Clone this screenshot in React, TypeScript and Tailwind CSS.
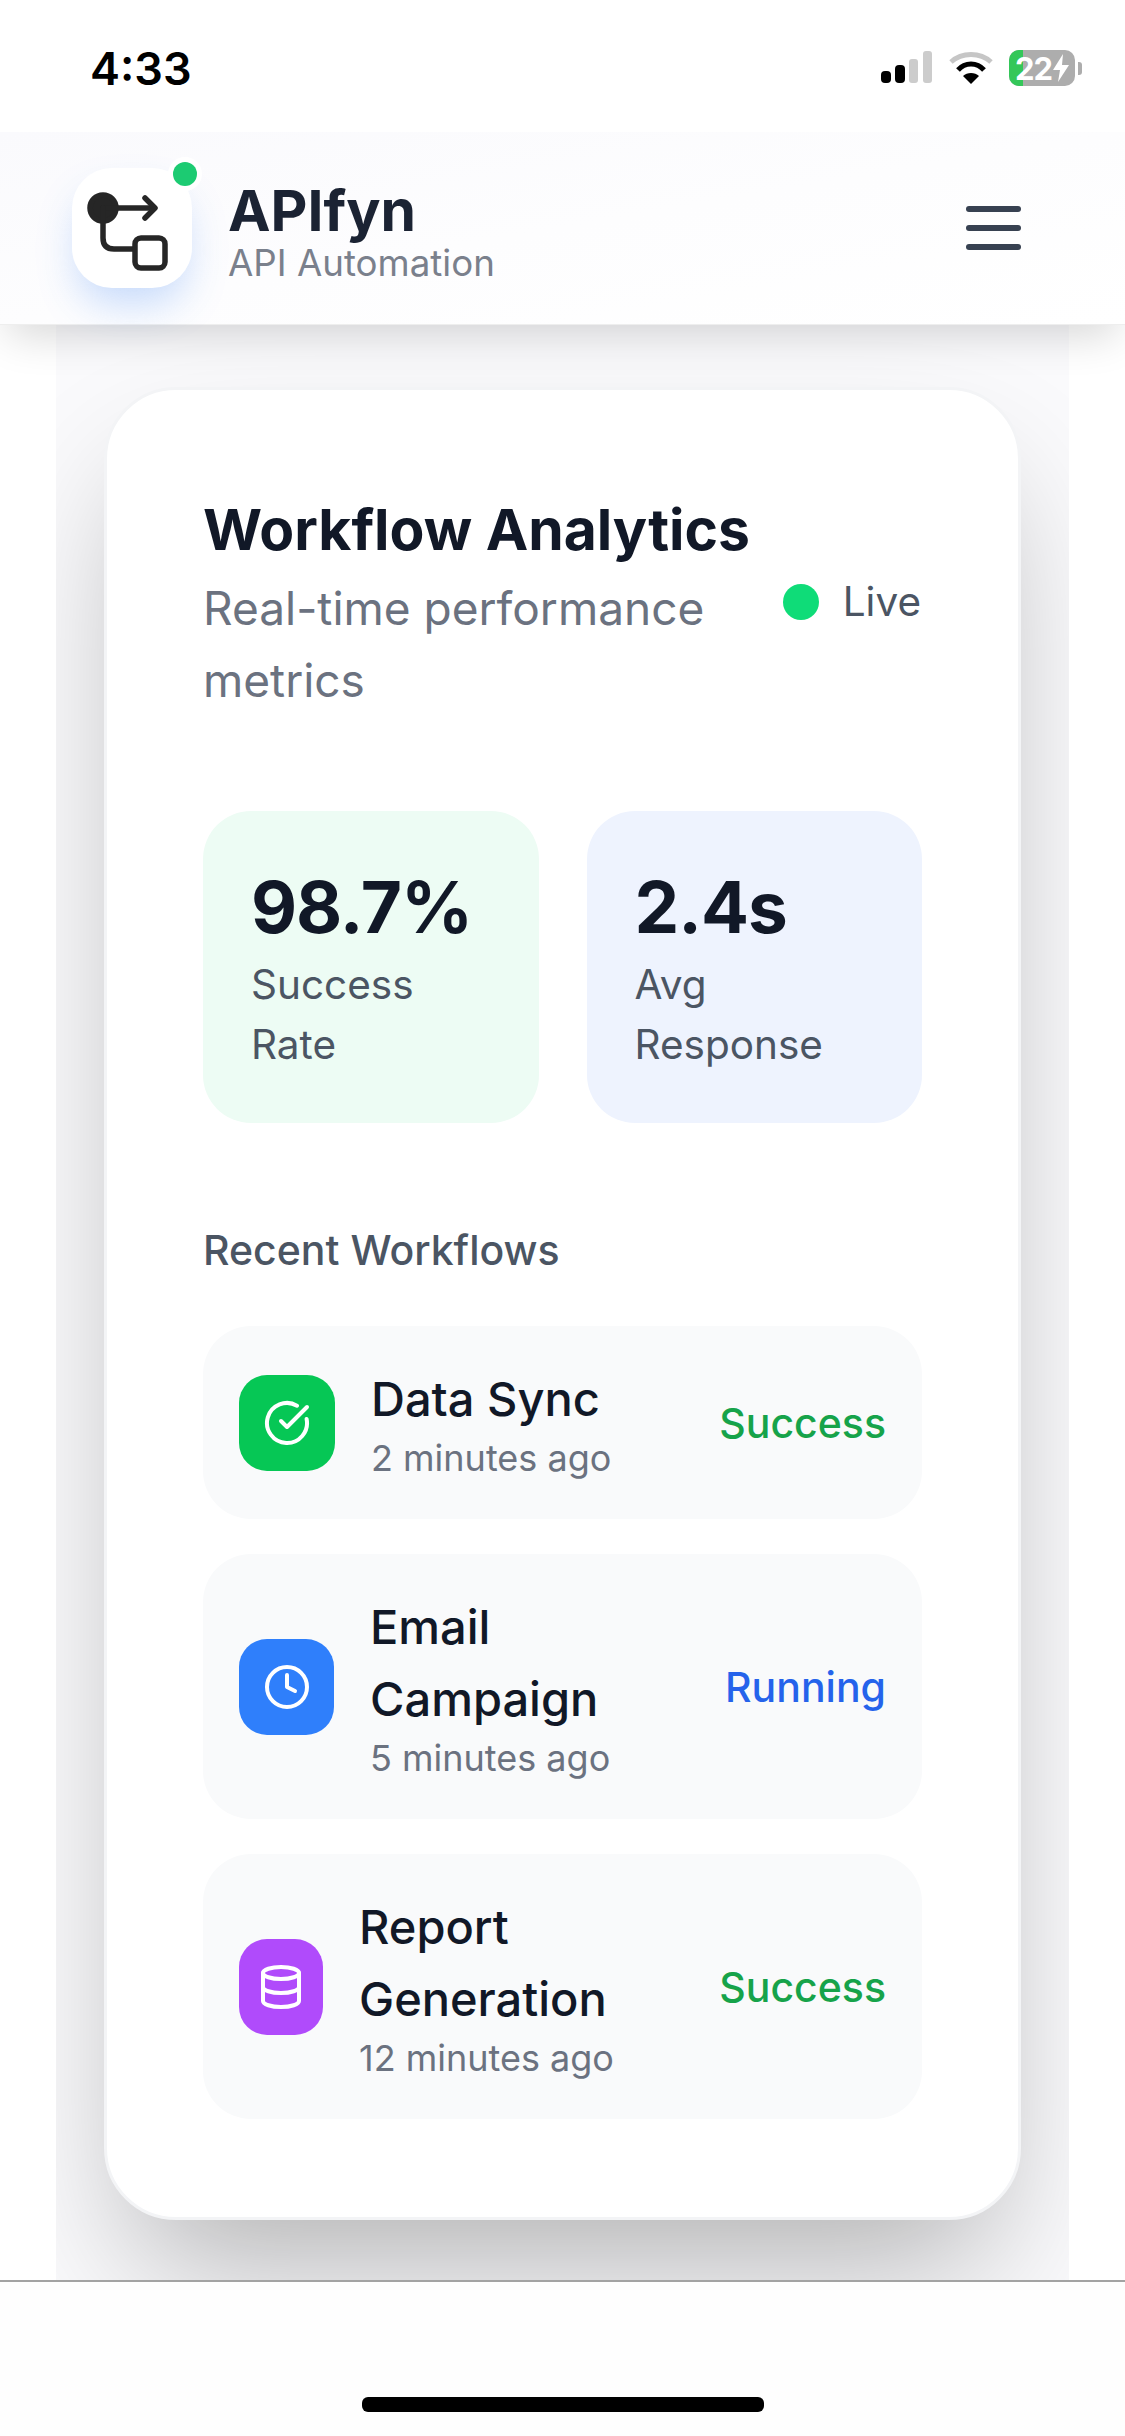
import { CircleCheckBig, Clock, Database } from 'lucide-react';

const rows = [
  { name: 'Data Sync', time: '2 minutes ago', status: 'Success', tone: 'text-[#16a34a]', bg: 'bg-[#06c755]', w: 'w-[96px]', Icon: CircleCheckBig },
  { name: 'Email Campaign', time: '5 minutes ago', status: 'Running', tone: 'text-[#2563eb]', bg: 'bg-[#2f7ffb]', w: 'w-[95px]', Icon: Clock },
  { name: 'Report Generation', time: '12 minutes ago', status: 'Success', tone: 'text-[#16a34a]', bg: 'bg-[#b04bfb]', w: 'w-[84px]', Icon: Database },
];

function StatusBar() {
  return (
    <div className="relative z-20 h-[132px] shrink-0 bg-white flex items-center justify-between pl-[90px] pr-[43px]">
      <span className="text-[45px] leading-none font-semibold text-black mb-[-4px]">4:33</span>
      <div className="flex items-center gap-[15px] mb-[-4px]">
        <svg width="52" height="34" viewBox="0 0 52 34">
          <rect x="0" y="20" width="10" height="12" rx="4" fill="#000" />
          <rect x="14" y="14" width="10" height="18" rx="4" fill="#000" />
          <rect x="28" y="8" width="9" height="24" rx="3" fill="#ccc" />
          <rect x="42" y="0" width="9" height="32" rx="3" fill="#ccc" />
        </svg>
        <svg width="46" height="34" viewBox="0 0 46 34" fill="none">
          <path d="M3 11 C14 1 32 1 43 11" stroke="#c6c6c6" strokeWidth="5" />
          <path d="M10 19 C17 11 29 11 36 19" stroke="#000" strokeWidth="5" />
          <path d="M23 33 L15 25 C19 21 27 21 31 25 Z" fill="#000" />
        </svg>
        <div className="flex items-center gap-[3px]">
          <div className="relative w-[66px] h-[36px] rounded-[10px] bg-[#adadad] overflow-hidden flex items-center justify-center gap-[1px]">
            <div className="absolute left-0 top-0 bottom-0 w-[14px] bg-[#34c759]" />
            <span className="relative text-[31px] leading-none font-bold text-white tracking-[-1px]">22</span>
            <svg className="relative" width="16" height="28" viewBox="0 0 16 28">
              <path d="M10 0 L0 16 H7 L5 28 L16 11 H9 Z" fill="#fff" />
            </svg>
          </div>
          <div className="w-[4px] h-[13px] rounded-r-[3px] bg-[#adadad]" />
        </div>
      </div>
    </div>
  );
}

function Logo() {
  return (
    <div className="relative w-[120px] h-[120px] shrink-0 rounded-[40px] bg-white shadow-[0_22px_40px_-6px_rgba(59,130,246,0.28)] flex items-center justify-center">
      <svg width="120" height="120" viewBox="0 0 120 120" fill="none" stroke="#262626" strokeWidth="5.5" strokeLinecap="round" strokeLinejoin="round">
        <circle cx="31" cy="40" r="13" fill="#262626" />
        <path d="M31 40 H82" />
        <path d="M73 30 L83 40 L73 50" />
        <path d="M31 40 V70 Q31 81 42 81 H61" />
        <rect x="63" y="70" width="30" height="30" rx="6" />
      </svg>
      <div className="absolute right-[-5px] top-[-6px] w-[24px] h-[24px] rounded-full bg-[#1ccb72] ring-[5px] ring-white" />
    </div>
  );
}

function Header() {
  return (
    <header className="relative z-10 h-[193px] shrink-0 bg-gradient-to-br from-[#fafafd] via-[#fdfdfe] to-white shadow-[0_18px_40px_-8px_rgba(0,0,0,0.16)] flex items-center justify-between pl-[72px] pr-[104px] border-b border-[#eeeeee]">
      <div className="flex items-center gap-[36px]">
        <Logo />
        <div className="pt-[6px]">
          <div className="text-[57px] leading-[63px] font-bold text-[#1b2333]">APIfyn</div>
          <div className="text-[36.7px] leading-[42px] text-[#7a808c]">API Automation</div>
        </div>
      </div>
      <div className="flex flex-col gap-[13px] w-[55px]">
        <div className="h-[6px] rounded-full bg-[#374151]" />
        <div className="h-[6px] rounded-full bg-[#374151]" />
        <div className="h-[6px] rounded-full bg-[#374151]" />
      </div>
    </header>
  );
}

function Stat({ value, label, bg }: { value: string; label: string; bg: string }) {
  return (
    <div className={`rounded-[48px] p-[48px] h-[312px] ${bg}`}>
      <div className="text-[71px] leading-[96px] font-bold text-[#111827] tracking-[-1px]">{value}</div>
      <div className="text-[40.5px] leading-[60px] text-[#4b5563]">{label}</div>
    </div>
  );
}

export default function App() {
  return (
    <div className="w-[1125px] h-[2436px] flex flex-col bg-white font-['Inter',sans-serif] overflow-hidden">
      <StatusBar />
      <Header />
      <main className="flex-1 min-h-0 mx-[56px] px-[48px] pt-[62px] bg-[#fafafc] overflow-hidden">
        <section className="rounded-[72px] bg-white border-[3px] border-[#f3f4f6] px-[96px] pt-[98px] pb-[98px] shadow-[0_70px_140px_-30px_rgba(0,0,0,0.3)]">
          <div className="flex items-center justify-between mb-[95px]">
            <div className="w-[560px]">
              <h1 className="text-[57px] leading-[84px] font-bold text-[#111827] whitespace-nowrap">Workflow Analytics</h1>
              <p className="text-[46px] leading-[72px] text-[#6b7280]">Real-time performance metrics</p>
            </div>
            <div className="flex items-center gap-[24px] pr-[1px]">
              <div className="w-[36px] h-[36px] rounded-full bg-[#0fdc78]" />
              <span className="text-[40.5px] leading-[60px] text-[#4b5563]">Live</span>
            </div>
          </div>
          <div className="grid grid-cols-2 gap-[48px] mb-[97px]">
            <Stat value="98.7%" label="Success Rate" bg="bg-[#edfcf4]" />
            <Stat value="2.4s" label="Avg Response" bg="bg-[#eef3fe]" />
          </div>
          <h2 className="text-[41px] leading-[60px] font-medium text-[#4b5563] mb-[46px]">Recent Workflows</h2>
          <div className="flex flex-col gap-[35px]">
            {rows.map(({ name, time, status, tone, bg, w, Icon }) => (
              <div key={name} className="flex items-center justify-between gap-[36px] rounded-[48px] bg-[#f9fafb] px-[36px] py-[37px]">
                <div className="flex items-center gap-[36px] min-w-0">
                  <div className={`${w} h-[96px] shrink-0 rounded-[28px] flex items-center justify-center ${bg}`}>
                    <Icon size={48} color="#fff" strokeWidth={2} />
                  </div>
                  <div className="min-w-0">
                    <div className="text-[47px] leading-[72px] font-medium text-[#111827]">{name}</div>
                    <div className="text-[36px] leading-[47px] text-[#6b7280]">{time}</div>
                  </div>
                </div>
                <span className={`shrink-0 text-[41px] leading-[60px] font-medium ${tone}`}>{status}</span>
              </div>
            ))}
          </div>
        </section>
      </main>
      <footer className="h-[156px] shrink-0 bg-[#fefefe] border-t-2 border-[#a3a3a3] flex items-end justify-center pb-[24px]">
        <div className="w-[402px] h-[15px] rounded-[6px] bg-black" />
      </footer>
    </div>
  );
}
